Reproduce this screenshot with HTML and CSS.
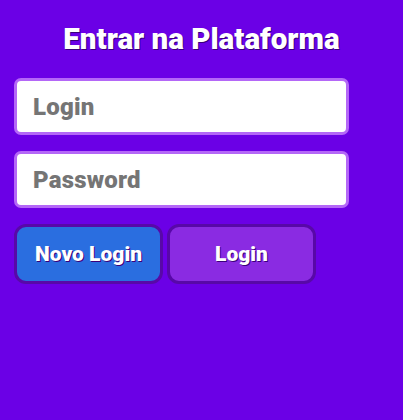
FILE: index.html
```html
<!DOCTYPE html>
<html lang="pt">
<head>
<meta charset="utf-8">
<link rel="stylesheet" href="styles.css">
</head>
<body>
<div class="page">
  <h1 class="title">Entrar na Plataforma</h1>
  <form class="form">
    <input class="field" type="text" placeholder="Login">
    <input class="field" type="password" placeholder="Password">
    <div class="actions">
      <button type="button" class="btn btn-new">Novo Login</button>
      <button type="button" class="btn btn-login">Login</button>
    </div>
  </form>
</div>
</body>
</html>
```

FILE: styles.css
```css
html, body {
  margin: 0;
  padding: 0;
  background: #6b00e6;
  height: 100%;
}
body {
  font-family: Roboto, "Liberation Sans", Arial, sans-serif;
  font-weight: 900;
}
.page {
  padding: 22px 14px;
}
.title {
  margin: 0 0 22px;
  text-align: center;
  color: #fff;
  font-size: 29.5px;
  font-weight: 900;
  line-height: 34px;
  letter-spacing: 0;
  text-shadow: 1px 1px 0 #3a007a;
}
.form {
  display: flex;
  flex-direction: column;
  gap: 16px;
  width: 335px;
}
.field {
  box-sizing: border-box;
  width: 335px;
  height: 57px;
  border: 3px solid #b467f7;
  border-radius: 7px;
  background: #fff;
  padding: 0 16px;
  font-family: inherit;
  font-weight: 900;
  font-size: 24px;
  letter-spacing: 0.2px;
  color: #333;
  outline: none;
}
.field::placeholder {
  color: #757575;
}
.actions {
  display: flex;
  gap: 4px;
}
.btn {
  box-sizing: border-box;
  width: 149px;
  height: 60px;
  border: 3px solid #5808a8;
  border-radius: 12px;
  color: #fff;
  font-family: inherit;
  font-weight: 900;
  font-size: 21px;
  letter-spacing: 0;
  text-shadow: 1px 1px 0 #3a007a;
  cursor: pointer;
}
.btn-new {
  background: #2a6ee0;
}
.btn-login {
  background: #8a2be2;
}
```
